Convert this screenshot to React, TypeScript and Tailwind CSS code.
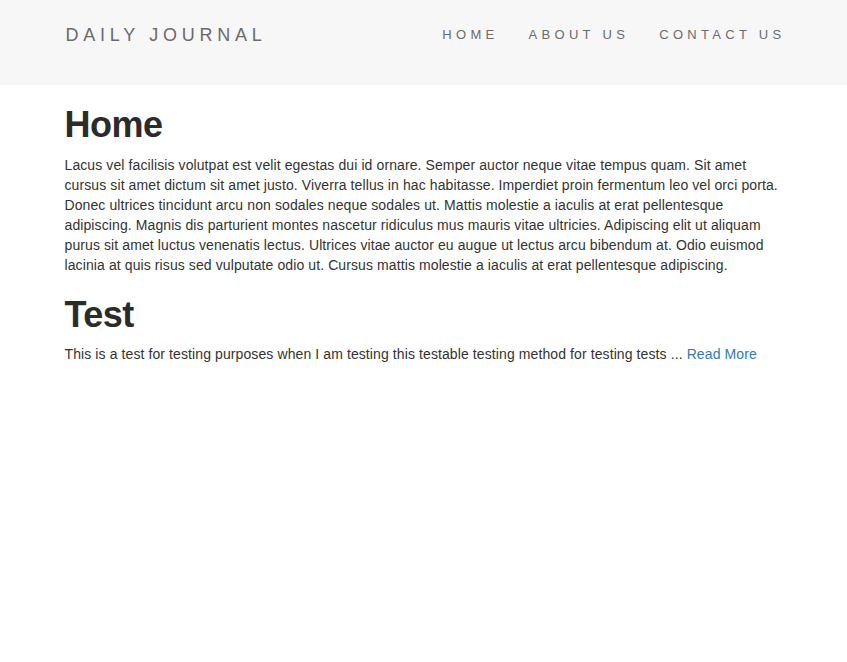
import React from "react";

const posts = [
  {
    title: "Home",
    body: "Lacus vel facilisis volutpat est velit egestas dui id ornare. Semper auctor neque vitae tempus quam. Sit amet cursus sit amet dictum sit amet justo. Viverra tellus in hac habitasse. Imperdiet proin fermentum leo vel orci porta. Donec ultrices tincidunt arcu non sodales neque sodales ut. Mattis molestie a iaculis at erat pellentesque adipiscing. Magnis dis parturient montes nascetur ridiculus mus mauris vitae ultricies. Adipiscing elit ut aliquam purus sit amet luctus venenatis lectus. Ultrices vitae auctor eu augue ut lectus arcu bibendum at. Odio euismod lacinia at quis risus sed vulputate odio ut. Cursus mattis molestie a iaculis at erat pellentesque adipiscing.",
    more: false,
  },
  {
    title: "Test",
    body: "This is a test for testing purposes when I am testing this testable testing method for testing tests ...",
    more: true,
  },
];

const links = ["HOME", "ABOUT US", "CONTACT US"];

function App() {
  return (
    <div className="min-h-screen bg-white text-[#333] text-[14px] leading-[20px] font-['Liberation_Sans',Arial,sans-serif]">
      <nav className="h-[85px] bg-[#f7f7f7]">
        <div className="w-[750px] mx-auto pl-[17px] pr-[13px] flex justify-between items-start pt-[24px]">
          <a className="text-[18px] leading-[22px] tracking-[4.75px] text-[#6b6b6b]">
            DAILY JOURNAL
          </a>
          <ul className="flex -mr-[15px] pt-[2px]">
            {links.map(l => (
              <li key={l} className="px-[15px] text-[13px] leading-[18px] tracking-[4.3px] text-[#6b6b6b]">
                {l}
              </li>
            ))}
          </ul>
        </div>
      </nav>
      <div className="w-[750px] mx-auto pl-[16px] pr-[14px] tracking-[0.1px]">
        {posts.map(p => (
          <div key={p.title}>
            <h1 className="mt-[20px] mb-[10px] text-[36px] leading-[39.6px] font-bold tracking-[-0.5px] text-[#2b2b2b]">
              {p.title}
            </h1>
            <p className="mb-[10px]">
              {p.body}
              {p.more && <a className="text-[#337ab7]"> Read More</a>}
            </p>
          </div>
        ))}
      </div>
    </div>
  );
}

export default App;
